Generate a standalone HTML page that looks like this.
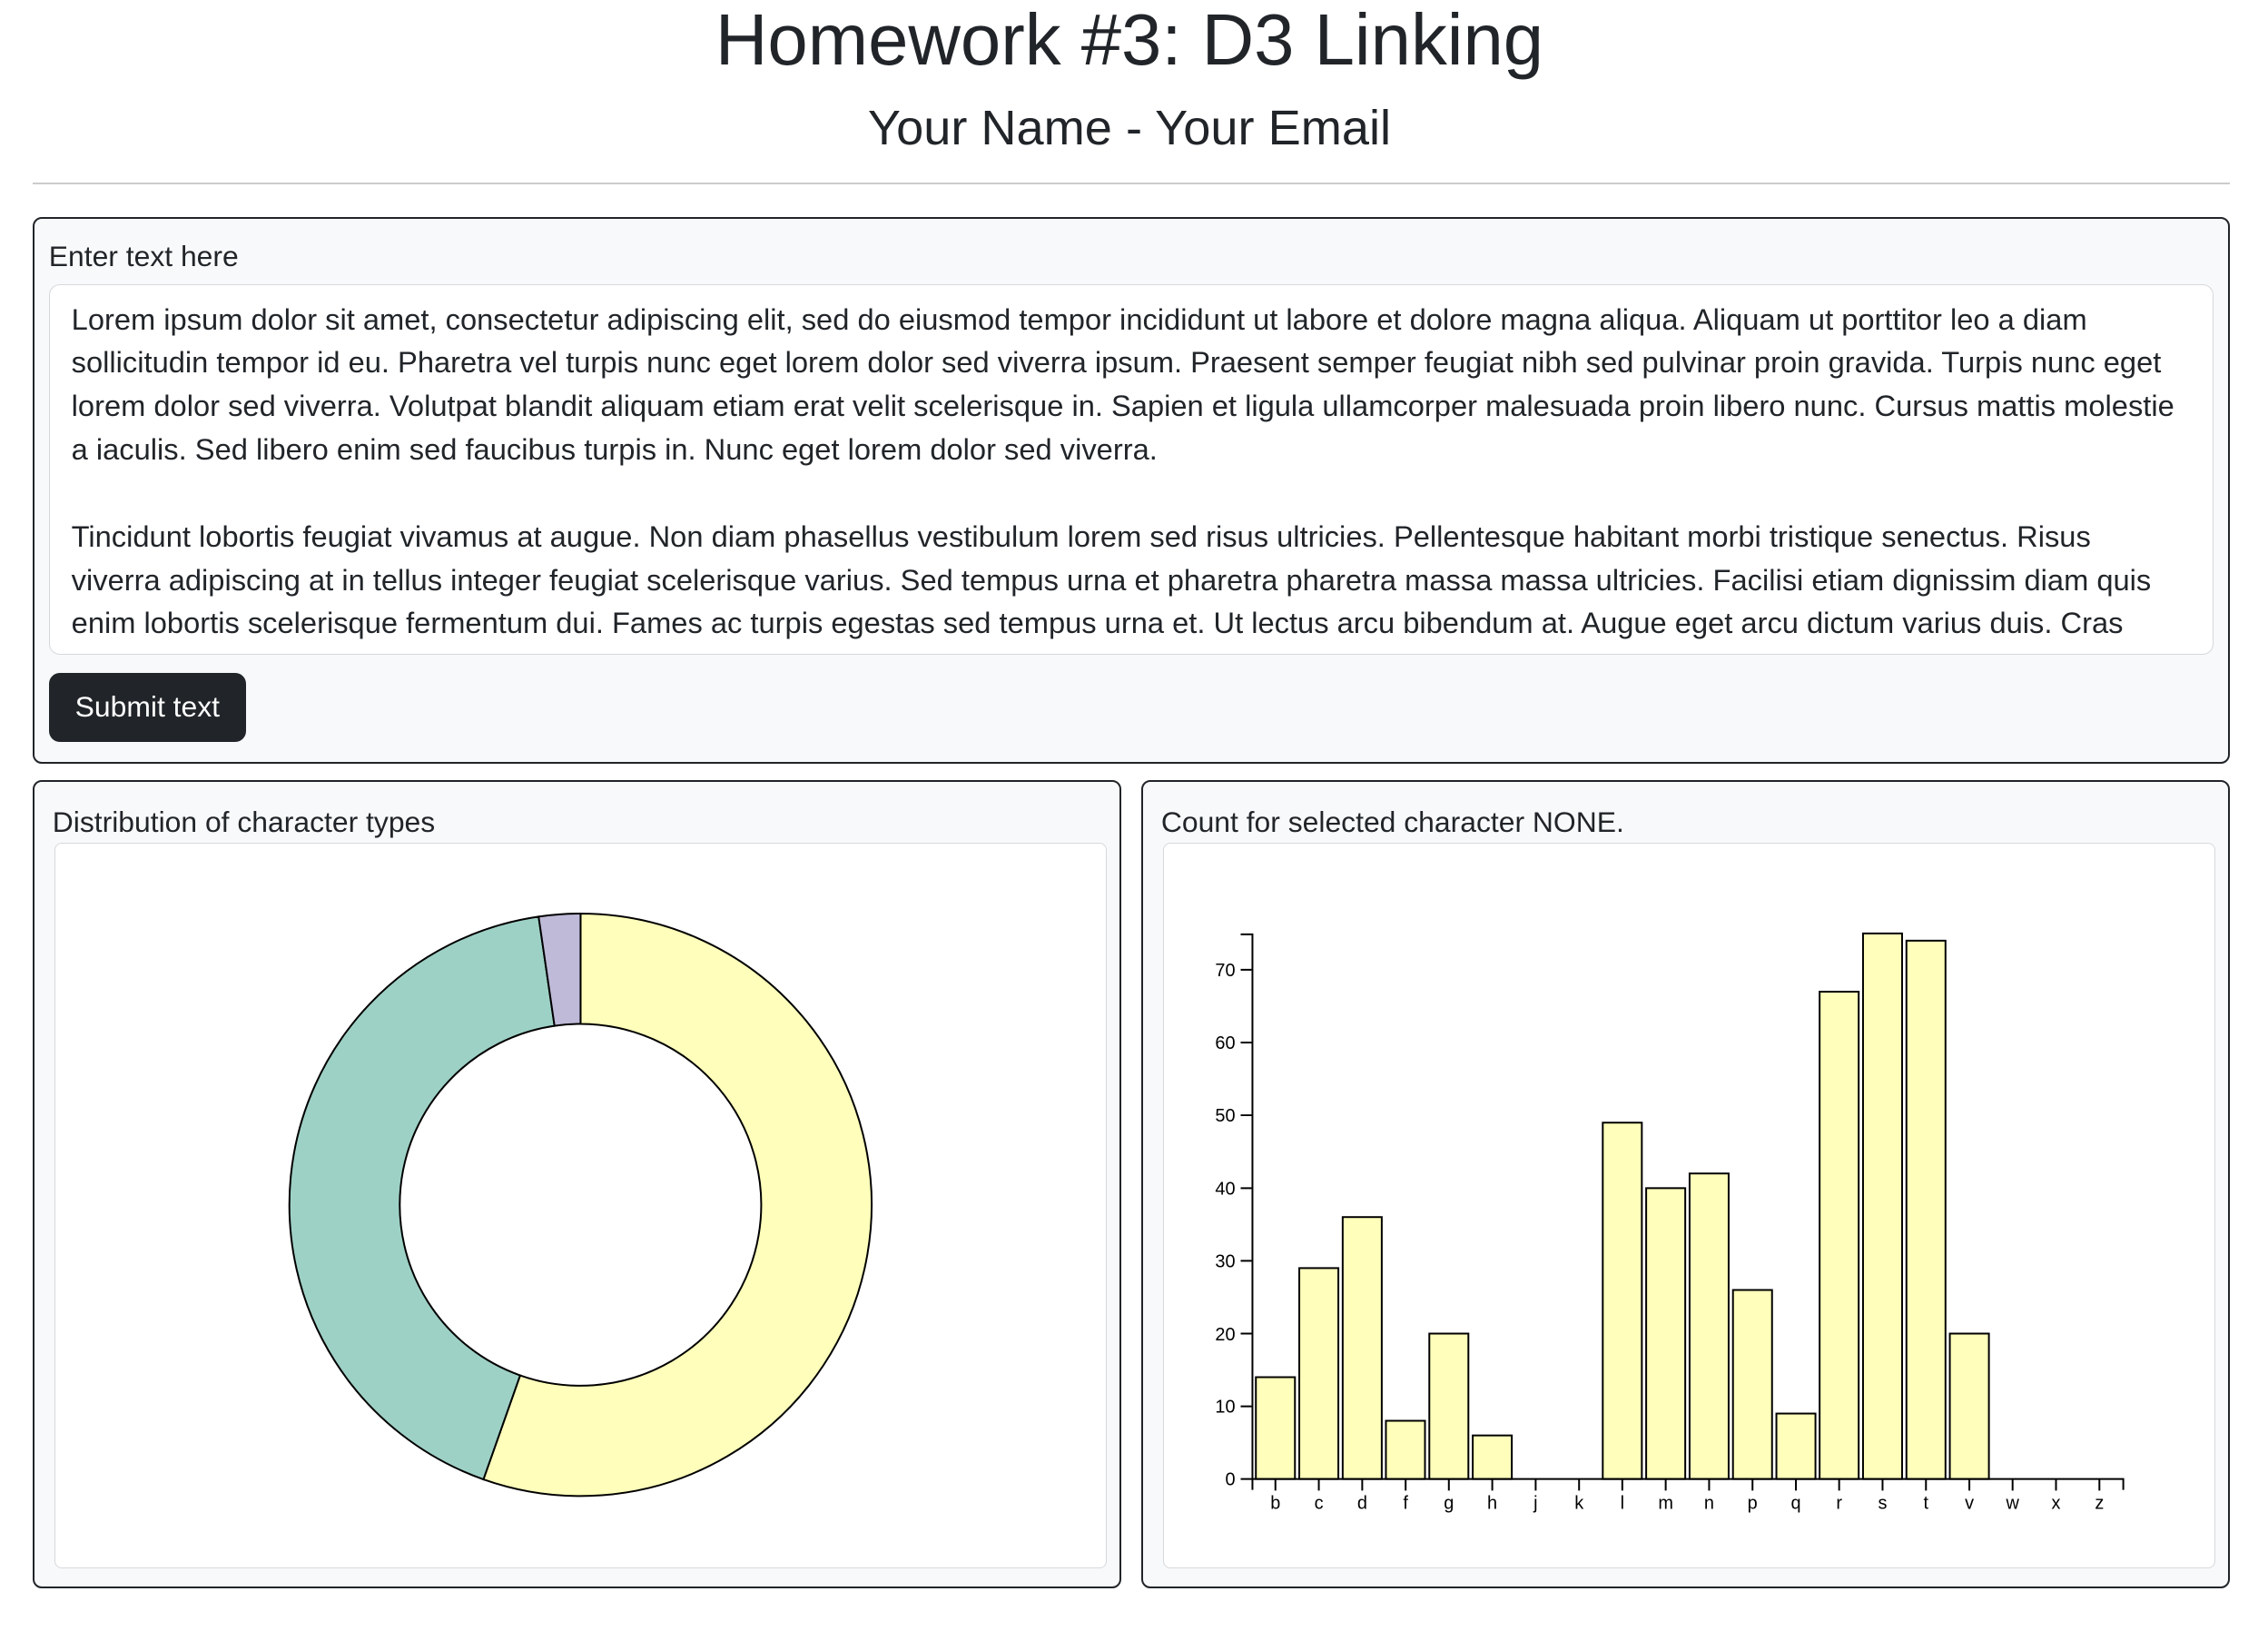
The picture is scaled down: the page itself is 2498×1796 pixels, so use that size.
<!DOCTYPE html>
<html><head><meta charset="utf-8"><style>
html{zoom:1.992}
body{margin:0;width:1249px;height:898px;background:#fff;font-family:"Liberation Sans",sans-serif;color:#212529;position:relative;overflow:hidden}
h1{position:absolute;left:0;width:1249px;top:-2px;margin:0;text-align:center;font-size:40px;font-weight:500;line-height:48px}
h3{position:absolute;left:0;width:1249px;top:54px;margin:0;text-align:center;font-size:27.2px;font-weight:500;line-height:34px}
.hr{position:absolute;left:18px;width:1215px;top:101px;height:1px;background:#ccc}
.card{position:absolute;background:#f8f9fa;border:1.2px solid #212529;border-radius:5px;box-sizing:border-box}
.lbl{position:absolute;font-size:16px;line-height:24px}
.ta{position:absolute;left:8px;top:36px;width:1197px;height:205px;background:#fff;border:1px solid #d6d9dc;border-radius:6px;box-sizing:border-box;padding:7px 12px;font-size:16.4px;line-height:24px;overflow:hidden;white-space:nowrap}
.btn{position:absolute;left:8px;top:251px;width:109px;height:38px;background:#212529;color:#fff;border-radius:6px;font-size:16px;line-height:38px;text-align:center}
.inner{position:absolute;background:#fff;border:1px solid #d6d9dc;border-radius:4px;box-sizing:border-box}
svg{position:absolute;left:0;top:0}
</style></head><body>
<h1>Homework #3: D3 Linking</h1>
<h3>Your Name - Your Email</h3>
<div class="hr"></div>
<div class="card" style="left:18px;top:120px;width:1215px;height:302px">
<div class="lbl" style="left:8px;top:9px">Enter text here</div>
<div class="ta">Lorem ipsum dolor sit amet, consectetur adipiscing elit, sed do eiusmod tempor incididunt ut labore et dolore magna aliqua. Aliquam ut porttitor leo a diam<br>sollicitudin tempor id eu. Pharetra vel turpis nunc eget lorem dolor sed viverra ipsum. Praesent semper feugiat nibh sed pulvinar proin gravida. Turpis nunc eget<br>lorem dolor sed viverra. Volutpat blandit aliquam etiam erat velit scelerisque in. Sapien et ligula ullamcorper malesuada proin libero nunc. Cursus mattis molestie<br>a iaculis. Sed libero enim sed faucibus turpis in. Nunc eget lorem dolor sed viverra.<br><br>Tincidunt lobortis feugiat vivamus at augue. Non diam phasellus vestibulum lorem sed risus ultricies. Pellentesque habitant morbi tristique senectus. Risus<br>viverra adipiscing at in tellus integer feugiat scelerisque varius. Sed tempus urna et pharetra pharetra massa massa ultricies. Facilisi etiam dignissim diam quis<br>enim lobortis scelerisque fermentum dui. Fames ac turpis egestas sed tempus urna et. Ut lectus arcu bibendum at. Augue eget arcu dictum varius duis. Cras</div>
<div class="btn">Submit text</div>
</div>
<div class="card" style="left:18px;top:431px;width:602px;height:447px">
<div class="lbl" style="left:10px;top:11px">Distribution of character types</div>
<div class="inner" style="left:11px;top:34px;width:582px;height:401px"></div>
</div>
<div class="card" style="left:631px;top:431px;width:602px;height:447px">
<div class="lbl" style="left:10px;top:11px">Count for selected character NONE.</div>
<div class="inner" style="left:11px;top:34px;width:582px;height:401px"></div>
</div>
<svg width="1249" height="898" viewBox="0 0 1249 898">
<g stroke="#000" stroke-width="1">
<path fill="#ffffbb" d="M321,505 A161,161 0 1 1 267.3,817.8 L287.6,760.3 A100,100 0 1 0 321,566 Z"/>
<path fill="#9ed1c6" d="M267.3,817.8 A161,161 0 0 1 297.8,506.7 L306.6,567.1 A100,100 0 0 0 287.6,760.3 Z"/>
<path fill="#bebad8" d="M297.8,506.7 A161,161 0 0 1 321,505 L321,566 A100,100 0 0 0 306.6,567.1 Z"/>
</g>
<g stroke="#000" stroke-width="1" fill="#ffffbb">
<rect x="694.4" y="761.3" width="21.6" height="56.3"/>
<rect x="718.4" y="701.0" width="21.6" height="116.6"/>
<rect x="742.4" y="672.8" width="21.6" height="144.8"/>
<rect x="766.3" y="785.4" width="21.6" height="32.2"/>
<rect x="790.3" y="737.2" width="21.6" height="80.4"/>
<rect x="814.3" y="793.5" width="21.6" height="24.1"/>
<rect x="886.2" y="620.6" width="21.6" height="197.0"/>
<rect x="910.2" y="656.8" width="21.6" height="160.8"/>
<rect x="934.2" y="648.7" width="21.6" height="168.9"/>
<rect x="958.2" y="713.1" width="21.6" height="104.5"/>
<rect x="982.2" y="781.4" width="21.6" height="36.2"/>
<rect x="1006.1" y="548.2" width="21.6" height="269.4"/>
<rect x="1030.1" y="516.0" width="21.6" height="301.6"/>
<rect x="1054.1" y="520.0" width="21.6" height="297.6"/>
<rect x="1078.1" y="737.2" width="21.6" height="80.4"/>
</g>
<g stroke="#000" stroke-width="1" fill="none">
<path d="M686,516.5 H692.5 V817.6 H686"/>
<path d="M692.5,823.6 V817.6 H1174 V823.6"/>
<path d="M686,777.4H692M686,737.2H692M686,697H692M686,656.8H692M686,616.5H692M686,576.3H692M686,536.1H692"/>
<path d="M705.2,818V824M729.2,818V824M753.2,818V824M777.2,818V824M801.1,818V824M825.1,818V824M849.1,818V824M873.1,818V824M897,818V824M921,818V824M945,818V824M969,818V824M993,818V824M1016.9,818V824M1040.9,818V824M1064.9,818V824M1088.9,818V824M1112.8,818V824M1136.8,818V824M1160.8,818V824"/>
</g>
<g font-family="Liberation Sans, sans-serif" font-size="10" fill="#000" text-anchor="end">
<text x="683" y="821">0</text><text x="683" y="781">10</text><text x="683" y="741">20</text><text x="683" y="700.5">30</text><text x="683" y="660.3">40</text><text x="683" y="620">50</text><text x="683" y="579.8">60</text><text x="683" y="539.6">70</text>
</g>
<g font-family="Liberation Sans, sans-serif" font-size="10" fill="#000" text-anchor="middle">
<text x="705.2" y="834">b</text><text x="729.2" y="834">c</text><text x="753.2" y="834">d</text><text x="777.2" y="834">f</text><text x="801.1" y="834">g</text><text x="825.1" y="834">h</text><text x="849.1" y="834">j</text><text x="873.1" y="834">k</text><text x="897" y="834">l</text><text x="921" y="834">m</text><text x="945" y="834">n</text><text x="969" y="834">p</text><text x="993" y="834">q</text><text x="1016.9" y="834">r</text><text x="1040.9" y="834">s</text><text x="1064.9" y="834">t</text><text x="1088.9" y="834">v</text><text x="1112.8" y="834">w</text><text x="1136.8" y="834">x</text><text x="1160.8" y="834">z</text>
</g>
</svg>
</body></html>
